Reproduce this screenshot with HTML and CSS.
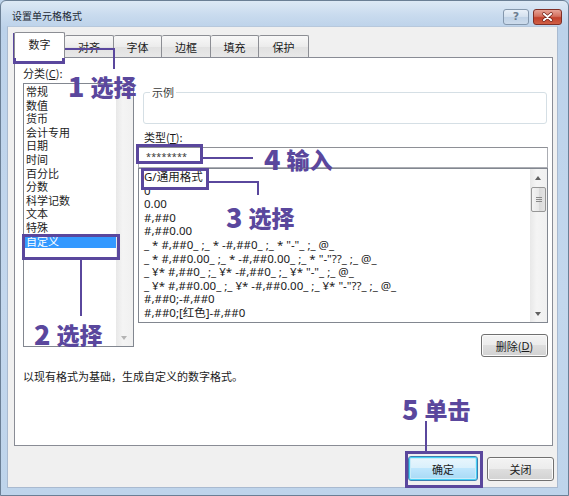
FILE: index.html
```html
<!DOCTYPE html>
<html lang="zh-CN">
<head>
<meta charset="utf-8">
<title>设置单元格格式</title>
<link rel="stylesheet" href="styles.css">
</head>
<body>
<div class="window">
  <div class="titlebar">
    <span class="title">设置单元格格式</span>
    <div class="caption-btns">
      <span class="cbtn help">?</span>
      <span class="cbtn close">
        <svg width="29" height="16" viewBox="0 0 29 16"><path d="M10.5 4.5 L18.5 11.5 M18.5 4.5 L10.5 11.5" stroke="#6b1f16" stroke-width="3.4" stroke-linecap="round"/><path d="M10.5 4.5 L18.5 11.5 M18.5 4.5 L10.5 11.5" stroke="#ffffff" stroke-width="2" stroke-linecap="round"/></svg>
      </span>
    </div>
  </div>
  <div class="client">
    <div class="tabs">
      <span class="tab active">数字</span>
      <span class="tab w49">对齐</span>
      <span class="tab w48">字体</span>
      <span class="tab w49">边框</span>
      <span class="tab w48">填充</span>
      <span class="tab w50">保护</span>
    </div>
    <div class="panel">
      <div class="main">
        <div class="left">
          <div class="lbl">分类(<u>C</u>):</div>
          <div class="catlist">
            <div class="items">
              <div class="item">常规</div>
              <div class="item">数值</div>
              <div class="item">货币</div>
              <div class="item">会计专用</div>
              <div class="item">日期</div>
              <div class="item">时间</div>
              <div class="item">百分比</div>
              <div class="item">分数</div>
              <div class="item">科学记数</div>
              <div class="item">文本</div>
              <div class="item">特殊</div>
              <div class="item sel">自定义</div>
            </div>
            <div class="vscroll disabled">
              <span class="arrow up"></span>
              <span class="track"></span>
              <span class="arrow down"></span>
            </div>
          </div>
        </div>
        <div class="right">
          <fieldset class="sample"><legend>示例</legend></fieldset>
          <div class="lbl lbl-type">类型(<u>T</u>):</div>
          <div class="typebox">********</div>
          <div class="fmtlist">
            <div class="items">
              <div class="item">G/通用格式</div>
              <div class="item">0</div>
              <div class="item">0.00</div>
              <div class="item">#,##0</div>
              <div class="item">#,##0.00</div>
              <div class="item">_ * #,##0_ ;_ * -#,##0_ ;_ * "-"_ ;_ @_</div>
              <div class="item">_ * #,##0.00_ ;_ * -#,##0.00_ ;_ * "-"??_ ;_ @_</div>
              <div class="item">_ ¥* #,##0_ ;_ ¥* -#,##0_ ;_ ¥* "-"_ ;_ @_</div>
              <div class="item">_ ¥* #,##0.00_ ;_ ¥* -#,##0.00_ ;_ ¥* "-"??_ ;_ @_</div>
              <div class="item">#,##0;-#,##0</div>
              <div class="item">#,##0;[红色]-#,##0</div>
            </div>
            <div class="vscroll">
              <span class="arrow up"></span>
              <span class="thumb"><i></i><i></i><i></i></span>
              <span class="track"></span>
              <span class="arrow down"></span>
            </div>
          </div>
          <div class="delrow"><span class="btn del">删除(<u>D</u>)</span></div>
        </div>
      </div>
      <p class="desc">以现有格式为基础，生成自定义的数字格式。</p>
    </div>
    <div class="footer">
      <span class="btn ok">确定</span>
      <span class="btn cancel">关闭</span>
    </div>
  </div>

  <!-- annotation overlays -->
  <div class="ann box b1"></div>
  <div class="ann hl l1a"></div>
  <div class="ann vl l1b"></div>
  <div class="ann label t1"><span class="num">1</span>选择</div>

  <div class="ann box b2"></div>
  <div class="ann vl l2"></div>
  <div class="ann label t2"><span class="num">2</span>选择</div>

  <div class="ann box b3"></div>
  <div class="ann hl l3a"></div>
  <div class="ann vl l3b"></div>
  <div class="ann label t3"><span class="num">3</span>选择</div>

  <div class="ann box b4"></div>
  <div class="ann hl l4"></div>
  <div class="ann label t4"><span class="num">4</span>输入</div>

  <div class="ann label t5"><span class="num">5</span>单击</div>
  <div class="ann vl l5"></div>
  <div class="ann box b5"></div>
</div>
</body>
</html>
```

FILE: styles.css
```css
* { box-sizing: border-box; }
html, body { margin: 0; padding: 0; }
body {
  width: 569px;
  height: 496px;
  overflow: hidden;
  font-family: "Noto Sans", "Noto Sans CJK SC", sans-serif;
  font-size: 11px;
  color: #1b1b1b;
  background: #bcd2ea;
}

.window {
  position: relative;
  width: 569px;
  height: 496px;
  display: flex;
  flex-direction: column;
  padding: 0 10px 7px 6px;
  border: 1px solid #6b7f95;
  border-radius: 6px 6px 0 0;
  background: linear-gradient(180deg, #dde9f5 0px, #c9dbee 14px, #bcd2ea 27px, #c3d7ed 60%, #bed4eb 100%);
}

/* title bar */
.titlebar {
  height: 27px;
  display: flex;
  justify-content: space-between;
  align-items: flex-start;
  margin-right: -4px;
}
.title {
  padding: 8px 0 0 5px;
  font-family: "Noto Sans CJK SC", sans-serif;
  font-size: 10px;
  line-height: 14px;
  color: #1e2a36;
}
.caption-btns {
  display: flex;
  gap: 4px;
  padding-top: 8px;
}
.cbtn {
  height: 16px;
  border-radius: 3px;
  display: flex;
  align-items: center;
  justify-content: center;
}
.help {
  width: 26px;
  border: 1px solid #8497ac;
  background: linear-gradient(180deg, #e9f0f8 0%, #d3e0ee 50%, #c0d2e6 51%, #cddcec 100%);
  color: #6c7d90;
  font-family: "DejaVu Sans", sans-serif;
  font-weight: bold;
  font-size: 11px;
  line-height: 14px;
}
.close {
  width: 29px;
  border: 1px solid #7f2f26;
  background: linear-gradient(180deg, #e7a396 0%, #d4715f 45%, #c2412c 55%, #d05f45 100%);
}

/* client area */
.client {
  flex: 1;
  display: flex;
  flex-direction: column;
  padding: 5px 3px 6px 6px;
  background: #f0f0f0;
  border: 1px solid #a9bad0;
  border-top-color: #b7c8dc;
}

.tabs {
  height: 25px;
  display: flex;
  align-items: flex-end;
  font-family: "Noto Sans CJK SC", sans-serif;
  font-size: 11px;
}
.tab {
  height: 22px;
  display: flex;
  align-items: center;
  justify-content: center;
  border: 1px solid #8c8e94;
  border-left: none;
  border-bottom: none;
  background: linear-gradient(180deg, #f8f8f8 0%, #ececec 50%, #e1e1e1 51%, #e8e8e8 100%);
  color: #1b1b1b;
  border-radius: 2px 2px 0 0;
}
.tab.active {
  width: 51px;
  height: 26px;
  margin-bottom: -1px;
  position: relative;
  z-index: 1;
  border-left: 1px solid #8c8e94;
  background: #ffffff;
  padding-bottom: 3px;
}
.w48 { width: 48px; }
.w49 { width: 49px; }
.w50 { width: 50px; }

.panel {
  width: 539px;
  height: 389px;
  border: 1px solid #898c95;
  background: #ffffff;
  padding: 8px 4px 0 8px;
  font-family: "Noto Sans", "Noto Sans CJK SC", sans-serif;
}
.main {
  display: flex;
  align-items: flex-start;
}
.left { width: 111px; }
.lbl {
  height: 14px;
  line-height: 14px;
  font-family: "Noto Sans CJK SC", sans-serif;
}
.lbl u { font-family: "Noto Sans", sans-serif; }

.catlist {
  margin-top: 3px;
  height: 264px;
  border: 1px solid #828790;
  display: flex;
}
.items { flex: 1; overflow: hidden; }
.catlist .items { padding: 1px 0 0 0; }
.item {
  height: 13.6px;
  line-height: 13.6px;
  white-space: pre;
}
.catlist .item { padding-left: 2px; font-family: "Noto Sans CJK SC", sans-serif; }
.catlist .item.sel { background: #3399ff; color: #ffffff; margin-right: 0; }

.vscroll {
  width: 17px;
  display: flex;
  flex-direction: column;
  background: linear-gradient(90deg, #e8e8e8 0%, #f4f4f4 40%, #f0f0f0 100%);
}
.vscroll .track { flex: 1; }
.arrow {
  height: 17px;
  position: relative;
}
.arrow::after {
  content: "";
  position: absolute;
  left: 5px;
  width: 0;
  height: 0;
  border-left: 3.5px solid transparent;
  border-right: 3.5px solid transparent;
}
.arrow.up::after { top: 7px; border-bottom: 4px solid #606060; }
.arrow.down::after { top: 7px; border-top: 4px solid #606060; }
.vscroll.disabled .arrow.up::after { border-bottom-color: #b4b4b4; }
.vscroll.disabled .arrow.down::after { border-top-color: #b4b4b4; }

.thumb {
  margin: 1px 1px 0 1px;
  height: 25px;
  border: 1px solid #979797;
  border-radius: 2px;
  background: linear-gradient(90deg, #f4f4f4 0%, #e8e8e8 50%, #d9d9d9 51%, #e3e3e3 100%);
  display: flex;
  flex-direction: column;
  align-items: center;
  justify-content: center;
  gap: 1px;
}
.thumb i {
  display: block;
  width: 6px;
  height: 1px;
  background: #8a8a8a;
}

.right {
  margin-left: 4px;
  width: 410px;
}
.sample {
  margin: 19px 1px 0 5px;
  padding: 0 6px;
  height: 39px;
  border: 1px solid #d5dfe5;
  border-radius: 3px;
}
.sample legend {
  padding: 0 2px;
  line-height: 14px;
  font-family: "Noto Sans CJK SC", sans-serif;
  color: #3b3b3b;
}
.lbl-type { margin-top: 6px; padding-left: 6px; }
.typebox {
  margin-top: 3px;
  height: 21px;
  border: 1px solid #abadb3;
  border-top-color: #8e9096;
  padding-left: 7px;
  line-height: 18px;
  font-size: 9px;
  letter-spacing: 0.2px;
  color: #333;
}
.fmtlist {
  height: 155px;
  border: 1px solid #828790;
  display: flex;
}
.fmtlist .items { padding: 1px 0 0 5px; font-size: 11.5px; }
.delrow {
  display: flex;
  justify-content: flex-end;
  margin-top: 11px;
}

.btn {
  display: flex;
  align-items: center;
  justify-content: center;
  border: 1px solid #707070;
  border-radius: 3px;
  background: linear-gradient(180deg, #f3f3f3 0%, #ececec 48%, #dedede 50%, #d2d2d2 100%);
  box-shadow: inset 0 0 0 1px #fbfbfb;
  font-family: "Noto Sans CJK SC", sans-serif;
  font-size: 11px;
  color: #1b1b1b;
}
.btn u { font-family: "Noto Sans", sans-serif; }
.del { width: 67px; height: 23px; }

.desc {
  margin: 12px 0 0 0;
  line-height: 14px;
  font-family: "Noto Sans CJK SC", sans-serif;
}

.footer {
  margin-top: 10px;
  display: flex;
  justify-content: flex-end;
  align-items: flex-start;
  gap: 9px;
}
.ok {
  width: 70px;
  height: 25px;
  border-color: #3c7fb1;
  box-shadow: inset 0 0 0 1px #48d0f5, inset 0 0 0 2px #c9ecf9;
  background: linear-gradient(180deg, #eaf6fd 0%, #d9f0fc 48%, #bee6fd 50%, #a7d9f5 100%);
}
.cancel { width: 67px; height: 24px; margin-top: 1px; }

/* annotations */
.ann { position: absolute; }
.box { border: 3px solid #5a479d; }
.hl { height: 2px; background: #5a479d; }
.vl { width: 2px; background: #5a479d; }
.label {
  font-family: "Noto Sans CJK SC", sans-serif;
  font-weight: 900;
  font-size: 23px;
  line-height: 24px;
  color: #5a479d;
  white-space: nowrap;
  display: flex;
  align-items: center;
}
.label .num {
  font-size: 27px;
  margin-right: 6px;
}

.b1 { left: 12px; top: 32px; width: 52px; height: 31px; }
.l1a { left: 64px; top: 47px; width: 50px; }
.l1b { left: 112px; top: 47px; height: 21px; }
.t1 { left: 67px; top: 73px; }

.b2 { left: 21px; top: 233px; width: 98px; height: 26px; }
.l2 { left: 79px; top: 259px; height: 56px; }
.t2 { left: 33px; top: 321px; }

.b4 { left: 135px; top: 143px; width: 67px; height: 20px; }
.l4 { left: 202px; top: 156px; width: 50px; }
.t4 { left: 263px; top: 146px; }

.b3 { left: 140px; top: 167px; width: 68px; height: 22px; }
.l3a { left: 208px; top: 180px; width: 50px; }
.l3b { left: 256px; top: 180px; height: 14px; }
.t3 { left: 225px; top: 204px; }

.t5 { left: 401px; top: 396px; }
.l5 { left: 424px; top: 420px; height: 31px; }
.b5 { left: 404px; top: 450px; width: 78px; height: 37px; }
```
